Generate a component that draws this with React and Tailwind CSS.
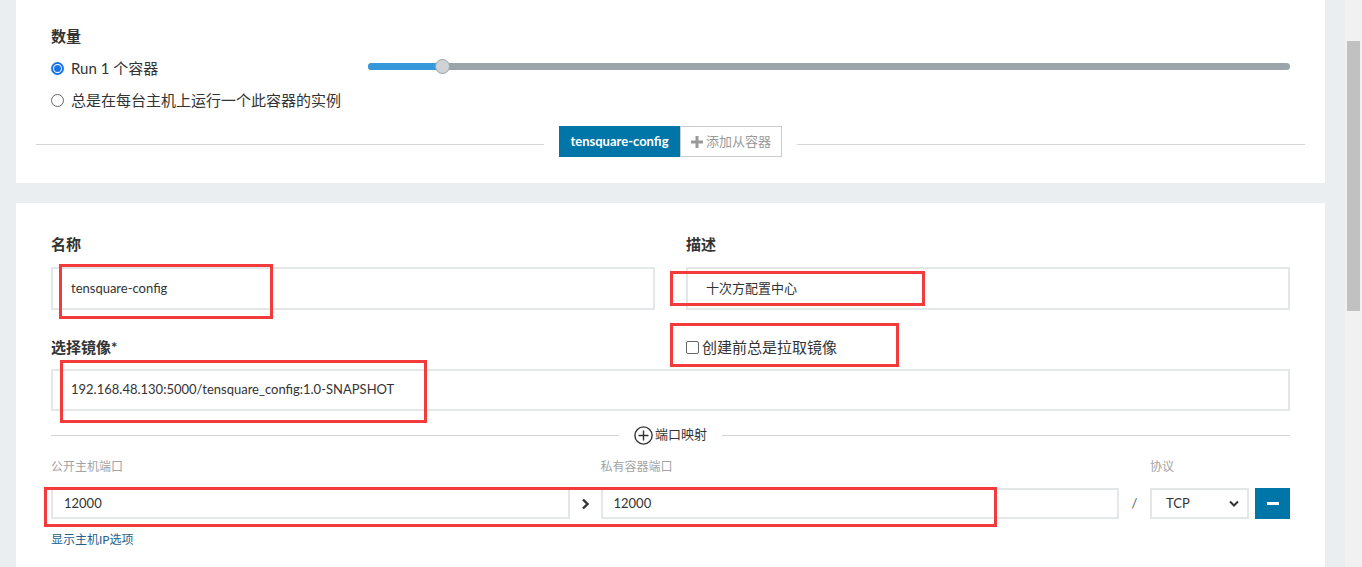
import React from "react";

const font = { fontFamily: "Lato, 'Noto Sans CJK SC', sans-serif" };

const Radio = ({ checked, label }) => (
  <label className="flex items-center h-8 text-[15px] text-[#333]">
    <span
      className={`w-[13px] h-[13px] rounded-full flex items-center justify-center ${
        checked ? "border-2 border-[#1a73e8]" : "border border-[#666]"
      }`}
    >
      {checked && <span className="w-[7px] h-[7px] rounded-full bg-[#1a73e8]" />}
    </span>
    <span className="ml-[7px]">{label}</span>
  </label>
);

const Field = ({ value, className = "" }) => (
  <div
    className={`flex items-center border-2 border-[#e4e7e8] bg-white text-[13px] text-[#333] ${className}`}
  >
    {value}
  </div>
);

const RedBox = ({ className }) => (
  <div className={`absolute border-[3px] border-[#f43b3b] pointer-events-none ${className}`} />
);

export default function App() {
  return (
    <div style={font} className="relative flex h-[567px] overflow-hidden bg-[#ebeef0]">
      <div className="flex-1 pl-4 pr-5">
        {/* 数量 */}
        <div className="h-[183px] bg-white px-5 pt-[26px]">
          <div className="px-[15px]">
            <p className="text-[15px] leading-5 font-bold text-[#333]">数量</p>
            <div className="mt-[6px] flex items-center">
              <div className="w-[317px]">
                <Radio checked label="Run 1 个容器" />
              </div>
              <div className="relative flex-1 h-[7px] mb-[3px] rounded-full bg-[#9aa4a9]">
                <div className="absolute left-0 top-0 h-[7px] w-[74px] rounded-l-full bg-[#3498db]" />
                <div className="absolute left-[67px] top-[-4px] w-[15px] h-[15px] rounded-full bg-[#cfd3d6] border border-[#9aa4a9]" />
              </div>
            </div>
            <Radio label="总是在每台主机上运行一个此容器的实例" />
          </div>
          <div className="mt-[10px] flex items-center">
            <div className="flex-1 h-px mt-[5px] bg-[#d3d6d8]" />
            <div className="mx-[15px] flex h-[31px]">
              <button className="w-[121px] bg-[#0075a8] text-white text-[13px] font-bold">
                tensquare-config
              </button>
              <button className="w-[102px] flex items-center justify-center border border-[#ccc] text-[13px] text-[#999]">
                <svg width="12" height="12" viewBox="0 0 12 12" className="mr-[3px]">
                  <path d="M4.5 0h3v4.5H12v3H7.5V12h-3V7.5H0v-3h4.5z" fill="#999" />
                </svg>
                添加从容器
              </button>
            </div>
            <div className="flex-1 h-px mt-[5px] bg-[#d3d6d8]" />
          </div>
        </div>

        {/* 容器配置 */}
        <div className="mt-5 h-[400px] bg-white px-[35px] pt-[31px]">
          <div className="grid grid-cols-2 gap-x-[31px]">
            <p className="text-[15px] leading-5 font-bold text-[#333]">名称</p>
            <p className="text-[15px] leading-5 font-bold text-[#333]">描述</p>
            <Field value="tensquare-config" className="mt-[13px] h-[43px] px-[18px]" />
            <Field value="十次方配置中心" className="mt-[13px] h-[43px] px-[18px]" />
            <p className="mt-[27px] text-[15px] leading-5 font-bold text-[#333]">选择镜像*</p>
            <label className="mt-[27px] flex items-center text-[15px] leading-5 text-[#333]">
              <span className="w-[13px] h-[13px] rounded-[2px] border border-[#666] bg-white" />
              <span className="ml-[3px]">创建前总是拉取镜像</span>
            </label>
          </div>
          <Field
            value="192.168.48.130:5000/tensquare_config:1.0-SNAPSHOT"
            className="mt-3 h-[42px] px-[18px]"
          />

          <div className="mt-[14px] flex items-center h-5">
            <div className="flex-1 h-px bg-[#d3d6d8]" />
            <div className="mx-[15px] flex items-center text-[13px] text-[#333]">
              <svg width="19" height="19" viewBox="0 0 19 19">
                <circle cx="9.5" cy="9.5" r="8.6" fill="none" stroke="#333" strokeWidth="1.4" />
                <path d="M9.5 4.5v10M4.5 9.5h10" stroke="#333" strokeWidth="1.4" />
              </svg>
              <span className="ml-[2px]">端口映射</span>
            </div>
            <div className="flex-1 h-px bg-[#d3d6d8]" />
          </div>

          <div className="mt-[13px] grid grid-cols-[1fr_31px_1fr_31px_99px_6px_35px] text-[12px] leading-[18px] text-[#a3a3a3]">
            <span>公开主机端口</span>
            <span />
            <span>私有容器端口</span>
            <span />
            <span>协议</span>
          </div>
          <div className="mt-3 grid grid-cols-[1fr_31px_1fr_31px_99px_6px_35px] h-[31px]">
            <Field value="12000" className="px-[11px]" />
            <div className="flex items-center justify-center">
              <svg width="9" height="12" viewBox="0 0 9 12">
                <path d="M2 1.5l4.5 4.5L2 10.5" fill="none" stroke="#333" strokeWidth="2.4" />
              </svg>
            </div>
            <Field value="12000" className="px-[11px]" />
            <div className="flex items-center justify-center text-[13px] text-[#555]">/</div>
            <div className="flex items-center justify-between border-2 border-[#e4e7e8] pl-[14px] pr-[8px] text-[13px] text-[#333]">
              TCP
              <svg width="10" height="7" viewBox="0 0 10 7">
                <path d="M1 1.5l4 4 4-4" fill="none" stroke="#333" strokeWidth="2" />
              </svg>
            </div>
            <span />
            <button className="flex items-center justify-center bg-[#0075a8]">
              <span className="w-3 h-[3px] bg-white" />
            </button>
          </div>
          <p className="mt-3 text-[12px] leading-[18px] text-[#1f5f8b]">显示主机IP选项</p>
        </div>
      </div>

      {/* scrollbar */}
      <div className="w-[17px] bg-[#f1f1f1] px-[2px]">
        <div className="mt-[41px] h-[270px] bg-[#c1c1c1]" />
      </div>

      <RedBox className="left-[59px] top-[264px] w-[214px] h-[55px]" />
      <RedBox className="left-[670px] top-[271px] w-[255px] h-[35px]" />
      <RedBox className="left-[670px] top-[323px] w-[229px] h-[44px]" />
      <RedBox className="left-[60px] top-[360px] w-[367px] h-[63px]" />
      <RedBox className="left-[44px] top-[487px] w-[953px] h-[40px]" />
    </div>
  );
}
